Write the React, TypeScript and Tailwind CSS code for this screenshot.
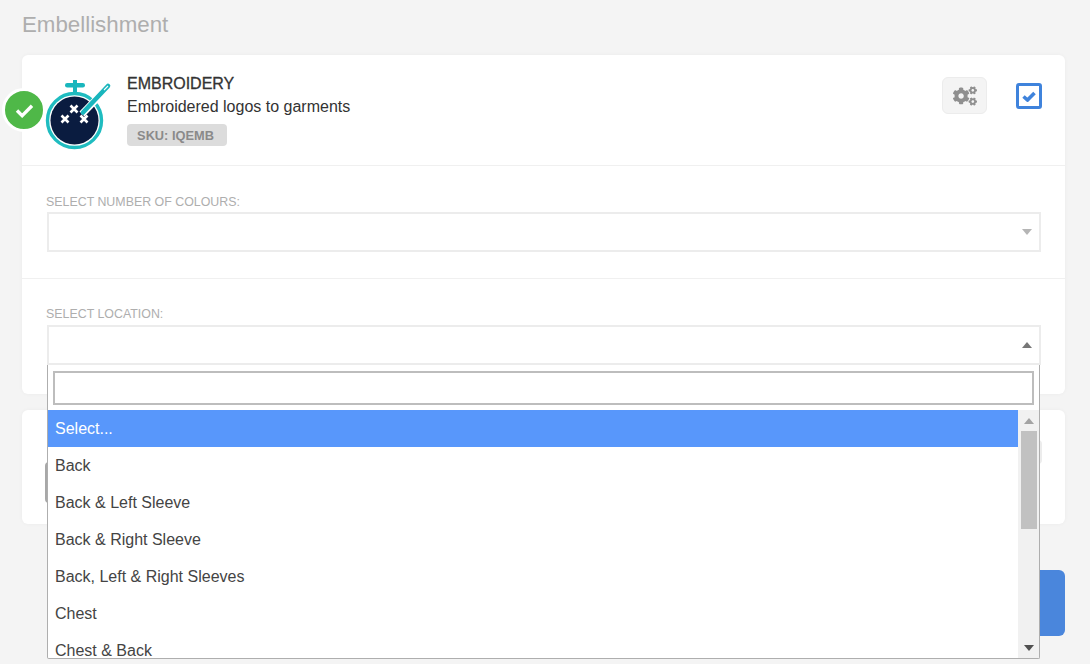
import { FaCogs } from "react-icons/fa";

const options = [
  "Back",
  "Back & Left Sleeve",
  "Back & Right Sleeve",
  "Back, Left & Right Sleeves",
  "Chest",
  "Chest & Back",
];

function Logo() {
  return (
    <svg viewBox="0 0 70 72" className="w-[70px] h-[72px]">
      <rect x="28" y="2" width="4" height="14" fill="#19b6bd" />
      <rect x="20" y="5" width="20" height="4.5" rx="2.2" fill="#19b6bd" />
      <circle cx="29.5" cy="42.5" r="27" fill="#fff" stroke="#1fbcc0" strokeWidth="3.4" />
      <circle cx="29.5" cy="42.5" r="24" fill="#0a1c40" />
      <path d="M37 36 L65 7" stroke="#fff" strokeWidth="7" />
      <path d="M38 34.5 L63 8" stroke="#19b6bd" strokeWidth="4.6" strokeLinecap="round" />
      <path d="M63 8 L59 12" stroke="#fff" strokeWidth="1.1" />
      <g stroke="#fff" strokeWidth="2.6">
        <path d="M25.5 27.5 l7 7 M32.5 27.5 l-7 7" />
        <path d="M16.5 37.5 l7 7 M23.5 37.5 l-7 7" />
        <path d="M35.5 37.5 l7 7 M42.5 37.5 l-7 7" />
      </g>
    </svg>
  );
}

function Arrow({ up, color }: { up?: boolean; color: string }) {
  return (
    <svg viewBox="0 0 10 6" className="w-[10px] h-[6px]">
      <path d={up ? "M0 6 L5 0 L10 6 Z" : "M0 0 L5 6 L10 0 Z"} fill={color} />
    </svg>
  );
}

export default function App() {
  return (
    <div className="relative h-[664px] overflow-hidden bg-[#f4f4f4] pl-[22px] pr-[25px] font-['Liberation_Sans',sans-serif]">
      <h2 className="pt-[12px] h-[55px] text-[22.3px] leading-[26px] text-[#aeaeae]">Embellishment</h2>

      <div className="relative h-[339px] rounded-md bg-white shadow-[0_0_4px_rgba(0,0,0,0.04)]">
        <div className="flex h-[111px] border-b border-[#f0f0f0] pl-[23px] pr-[23px] pt-[19px]">
          <div className="w-[82px] shrink-0 mt-[4px]">
            <Logo />
          </div>
          <div className="flex-1">
            <div className="text-base leading-5 text-[#333] [-webkit-text-stroke:0.3px_#333]">EMBROIDERY</div>
            <div className="mt-[3px] text-base leading-5 text-[#333]">Embroidered logos to garments</div>
            <span className="mt-[7px] inline-block h-[22px] w-[100px] rounded bg-[#dcdcdc] pr-[3px] text-center text-[12.8px] leading-[23px] font-bold text-[#8a8a8a]">
              SKU: IQEMB
            </span>
          </div>
          <div className="mt-[3px] mr-[1px] flex h-[37px] w-[45px] items-center justify-center rounded-md border border-[#ececec] bg-[#f4f4f4]">
            <FaCogs className="text-[24px] text-[#8f8f8f]" />
          </div>
          <div className="ml-[28px] mt-[9px] flex h-[26px] w-[26px] items-center justify-center rounded-[3px] border-[3.5px] border-[#3f83dc]">
            <svg viewBox="0 0 14 11" className="w-[14px] h-[11px]">
              <path d="M1.5 5.5 L5.5 9 L12.5 2" fill="none" stroke="#3f83dc" strokeWidth="3.6" />
            </svg>
          </div>
        </div>

        <div className="h-[113px] border-b border-[#f0f0f0] px-6 pt-[29px]">
          <div className="text-[12.4px] leading-[14px] text-[#aeaeae]">SELECT NUMBER OF COLOURS:</div>
          <div className="mt-[3px] ml-[1px] flex h-[40px] w-[994px] items-center justify-end border-2 border-[#ececec] pr-[7px]">
            <Arrow color="#b5b5b5" />
          </div>
        </div>

        <div className="px-6 pt-[28px]">
          <div className="text-[12.4px] leading-[14px] text-[#aeaeae]">SELECT LOCATION:</div>
          <div className="mt-[4px] ml-[1px] flex h-[40px] w-[994px] items-center justify-end border-2 border-[#ececec] pr-[7px]">
            <Arrow up color="#777" />
          </div>
        </div>
      </div>

      <div className="mt-[16px] flex h-[114px] justify-between rounded-md bg-white px-[23px] shadow-[0_0_4px_rgba(0,0,0,0.04)]">
        <div className="mt-[52px] h-[41px] w-[60px] rounded border-2 border-[#a8a8a8]" />
        <div className="mt-[30px] h-[24px] w-[60px] rounded border-2 border-[#ececec]" />
      </div>

      <div className="mt-[46px] ml-auto h-[66px] w-[120px] rounded-md bg-[#4a86dc]" />

      <div className="absolute left-[47px] top-[365px] flex h-[294px] w-[993px] flex-col rounded-b-[2px] border border-t-0 border-[#aeaeae] bg-white">
        <div className="pl-[5px] pr-[5px] pt-[6px] pb-[5px]">
          <div className="h-[34px] border-2 border-[#bdbdbd] bg-white" />
        </div>
        <div className="flex min-h-0 flex-1">
          <ul className="flex-1 overflow-hidden text-base text-[#444]">
            <li className="flex h-[37px] items-center bg-[#5897fb] px-[7px] text-white">Select...</li>
            {options.map((o) => (
              <li key={o} className="flex h-[37px] items-center px-[7px]">{o}</li>
            ))}
          </ul>
          <div className="flex w-[21px] flex-col items-center bg-[#f1f1f1]">
            <div className="flex h-[21px] items-center justify-center">
              <Arrow up color="#a3a3a3" />
            </div>
            <div className="h-[98px] w-[16px] bg-[#c1c1c1]" />
            <div className="mt-auto flex h-[21px] items-center justify-center">
              <Arrow color="#505050" />
            </div>
          </div>
        </div>
      </div>

      <div className="absolute left-[2px] top-[88px] flex h-[44px] w-[44px] items-center justify-center rounded-full border-[3px] border-white bg-[#4fb848]">
        <svg viewBox="0 0 20 16" className="w-[19px] h-[15px]">
          <path d="M2 8 L7.5 13.5 L18 3" fill="none" stroke="#fff" strokeWidth="3.6" />
        </svg>
      </div>
    </div>
  );
}
